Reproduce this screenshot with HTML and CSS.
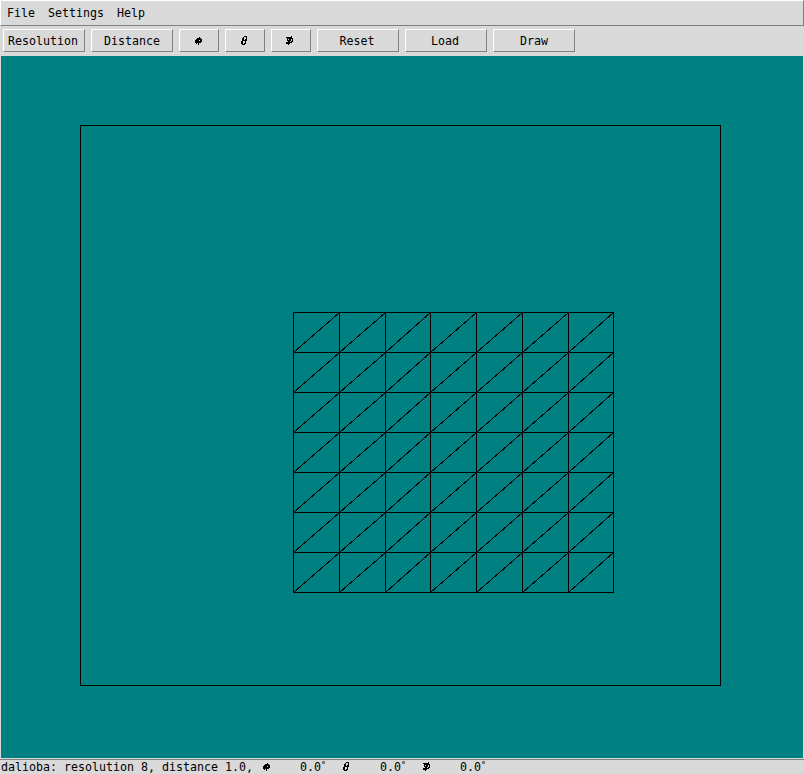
FILE: index.html
```html
<!DOCTYPE html>
<html lang="en"><head><meta charset="utf-8"><title>dalioba</title><link rel="stylesheet" href="styles.css"></head>
<body>
<svg class="defs" aria-hidden="true">
<symbol id="phi" viewBox="0 0 8 10"><path d="M4 1h1v1h-1zM2 2h4v1h-4zM1 3h6v1h-6zM0 4h4v1h-4zM5 4h2v1h-2zM0 5h7v1h-7zM0 6h6v1h-6zM1 7h1v1h-1zM3 7h1v1h-1zM3 8h1v1h-1z"/></symbol>
<symbol id="theta" viewBox="0 0 8 10"><path d="M3 0h3v1h-3zM2 1h1v1h-1zM5 1h1v1h-1zM1 2h2v1h-2zM5 2h1v1h-1zM1 3h2v1h-2zM4 3h2v1h-2zM1 4h5v1h-5zM0 5h2v1h-2zM4 5h1v1h-1zM0 6h2v1h-2zM4 6h1v1h-1zM0 7h2v1h-2zM3 7h2v1h-2zM1 8h3v1h-3z"/></symbol>
<symbol id="psi" viewBox="0 0 8 10"><path d="M5 0h1v1h-1zM0 1h6v1h-6zM1 2h6v1h-6zM1 3h1v1h-1zM3 3h2v1h-2zM6 3h1v1h-1zM1 4h4v1h-4zM6 4h1v1h-1zM2 5h2v1h-2zM5 5h2v1h-2zM0 6h6v1h-6zM0 7h4v1h-4zM2 8h1v1h-1z"/></symbol>
</svg>
<nav class="menu"><span>File</span><span>Settings</span><span>Help</span></nav>
<div class="toolbar">
<button>Resolution</button><button class="odd">Distance</button>
<button class="small"><svg class="sym"><use href="#phi"/></svg></button>
<button class="small"><svg class="sym"><use href="#theta"/></svg></button>
<button class="small psi"><svg class="sym"><use href="#psi"/></svg></button>
<button>Reset</button><button>Load</button><button class="odd">Draw</button>
</div>
<main class="canvas">
<svg width="802" height="702" viewBox="1 56 802 702" shape-rendering="crispEdges">
<g fill="none" stroke="#000" transform="translate(.5 .5)">
<path d="M80 125H720V685H80Z"/>
<path d="M293 312H613V592H293ZM293 352H613M293 392H613M293 432H613M293 472H613M293 512H613M293 552H613M339 312V592M385 312V592M430 312V592M476 312V592M522 312V592M568 312V592"/>
<path d="M293 352L339 312M293 392L339 352L385 312M293 432L339 392L385 352L430 312M293 472L339 432L385 392L430 352L476 312M293 512L339 472L385 432L430 392L476 352L522 312M293 552L339 512L385 472L430 432L476 392L522 352L568 312M293 592L339 552L385 512L430 472L476 432L522 392L568 352L613 312M339 592L385 552L430 512L476 472L522 432L568 392L613 352M385 592L430 552L476 512L522 472L568 432L613 392M430 592L476 552L522 512L568 472L613 432M476 592L522 552L568 512L613 472M522 592L568 552L613 512M568 592L613 552"/>
</g></svg>
</main>
<footer class="status"><span class="info">dalioba: resolution 8, distance 1.0,</span>
<span class="angle"><svg class="sym"><use href="#phi"/></svg><span>0.0<span class="deg">°</span></span></span>
<span class="angle"><svg class="sym"><use href="#theta"/></svg><span>0.0<span class="deg">°</span></span></span>
<span class="angle"><svg class="sym"><use href="#psi"/></svg><span>0.0<span class="deg">°</span></span></span>
</footer>
</body></html>
```
FILE: styles.css
```css
* { box-sizing: border-box; }
body { margin: 0; width: 804px; height: 774px; overflow: hidden; display: flex; flex-direction: column; background: #d9d9d9; color: #000; font: 11.63px/14px "DejaVu Sans Mono", monospace; }
.defs { display: none; }
.menu { height: 26px; flex: none; display: flex; gap: 13px; padding: 5px 0 0 6px; border: 1px solid #fff; border-right-color: #808080; border-bottom-color: #808080; }
.toolbar { height: 30px; flex: none; display: flex; gap: 6px; padding: 3px 0 0 3px; }
button { width: 82px; height: 23px; flex: none; display: flex; align-items: center; justify-content: center; padding: 1px 2px 0 0; margin: 0; border: 1px solid #fff; border-right-color: #808080; border-bottom-color: #808080; border-radius: 0; background: #d9d9d9; color: #000; font: inherit; }
.odd { padding-right: 0; }
.small { width: 40px; padding: 0; }
.psi { padding-right: 2px; }
.sym { width: 8px; height: 10px; flex: none; shape-rendering: crispEdges; }
.small .sym { margin: 1px 0 0; }
.canvas { height: 703px; flex: none; padding: 0 1px 1px; }
.canvas svg { display: block; background: #008080; }
.status { height: 15px; flex: none; display: flex; padding-left: 1px; border-top: 1px solid #808080; white-space: pre; }
.info { width: 260px; }
.angle { width: 80px; display: flex; align-items: flex-start; }
.angle .sym { margin: 2px 29px 0 2px; }
.deg { font-size: 8px; font-weight: bold; line-height: 0; position: relative; top: -3px; }
```
